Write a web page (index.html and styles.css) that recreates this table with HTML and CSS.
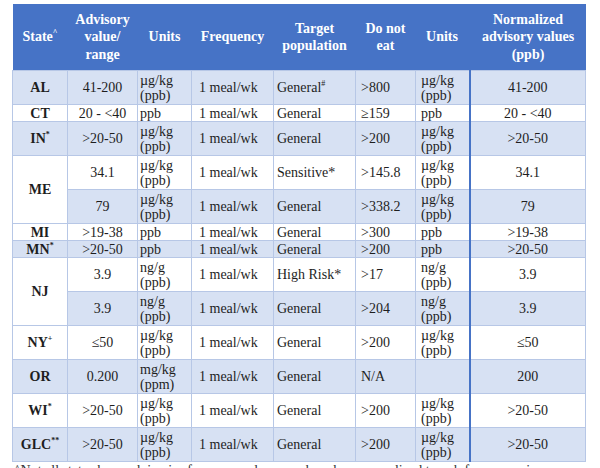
FILE: index.html
```html
<!DOCTYPE html>
<html>
<head>
<meta charset="utf-8">
<link rel="stylesheet" href="styles.css">
</head>
<body>
<div class="page">
<table class="adv">
<colgroup>
<col class="c1"><col class="c2"><col class="c3"><col class="c4"><col class="c5"><col class="c6"><col class="c7"><col class="c8">
</colgroup>
<thead>
<tr>
<th>State<sup>^</sup></th>
<th>Advisory<br>value/<br>range</th>
<th>Units</th>
<th>Frequency</th>
<th>Target<br>population</th>
<th>Do not<br>eat</th>
<th class="th7">Units</th>
<th>Normalized<br>advisory values<br>(ppb)</th>
</tr>
</thead>
<tbody>
<tr class="r2 alt">
<td class="st">AL</td><td class="ctr">41-200</td><td class="u1">µg/kg<br>(ppb)</td><td class="fq">1 meal/wk</td><td class="tg">General<sup>#</sup></td><td class="dn">&gt;800</td><td class="u2">µg/kg<br>(ppb)</td><td class="ctr">41-200</td>
</tr>
<tr class="r1">
<td class="st">CT</td><td class="ctr">20 - &lt;40</td><td class="u1">ppb</td><td class="fq">1 meal/wk</td><td class="tg">General</td><td class="dn">≥159</td><td class="u2">ppb</td><td class="ctr">20 - &lt;40</td>
</tr>
<tr class="r2 alt">
<td class="st">IN<sup>*</sup></td><td class="ctr">&gt;20-50</td><td class="u1">µg/kg<br>(ppb)</td><td class="fq">1 meal/wk</td><td class="tg">General</td><td class="dn">&gt;200</td><td class="u2">µg/kg<br>(ppb)</td><td class="ctr">&gt;20-50</td>
</tr>
<tr class="r2">
<td class="st white" rowspan="2">ME</td><td class="ctr">34.1</td><td class="u1">µg/kg<br>(ppb)</td><td class="fq">1 meal/wk</td><td class="tg">Sensitive*</td><td class="dn">&gt;145.8</td><td class="u2">µg/kg<br>(ppb)</td><td class="ctr">34.1</td>
</tr>
<tr class="r2 alt">
<td class="ctr">79</td><td class="u1">µg/kg<br>(ppb)</td><td class="fq">1 meal/wk</td><td class="tg">General</td><td class="dn">&gt;338.2</td><td class="u2">µg/kg<br>(ppb)</td><td class="ctr">79</td>
</tr>
<tr class="r1">
<td class="st">MI</td><td class="ctr">&gt;19-38</td><td class="u1">ppb</td><td class="fq">1 meal/wk</td><td class="tg">General</td><td class="dn">&gt;300</td><td class="u2">ppb</td><td class="ctr">&gt;19-38</td>
</tr>
<tr class="r1 alt">
<td class="st">MN<sup>*</sup></td><td class="ctr">&gt;20-50</td><td class="u1">ppb</td><td class="fq">1 meal/wk</td><td class="tg">General</td><td class="dn">&gt;200</td><td class="u2">ppb</td><td class="ctr">&gt;20-50</td>
</tr>
<tr class="r2">
<td class="st white" rowspan="2">NJ</td><td class="ctr">3.9</td><td class="u1">ng/g<br>(ppb)</td><td class="fq">1 meal/wk</td><td class="tg">High Risk*</td><td class="dn">&gt;17</td><td class="u2">ng/g<br>(ppb)</td><td class="ctr">3.9</td>
</tr>
<tr class="r2 alt">
<td class="ctr">3.9</td><td class="u1">ng/g<br>(ppb)</td><td class="fq">1 meal/wk</td><td class="tg">General</td><td class="dn">&gt;204</td><td class="u2">ng/g<br>(ppb)</td><td class="ctr">3.9</td>
</tr>
<tr class="r2">
<td class="st">NY<sup>+</sup></td><td class="ctr">≤50</td><td class="u1">µg/kg<br>(ppb)</td><td class="fq">1 meal/wk</td><td class="tg">General</td><td class="dn">&gt;200</td><td class="u2">µg/kg<br>(ppb)</td><td class="ctr">≤50</td>
</tr>
<tr class="r2 alt">
<td class="st">OR</td><td class="ctr">0.200</td><td class="u1">mg/kg<br>(ppm)</td><td class="fq">1 meal/wk</td><td class="tg">General</td><td class="dn">N/A</td><td class="u2"></td><td class="ctr">200</td>
</tr>
<tr class="r2">
<td class="st">WI<sup>*</sup></td><td class="ctr">&gt;20-50</td><td class="u1">µg/kg<br>(ppb)</td><td class="fq">1 meal/wk</td><td class="tg">General</td><td class="dn">&gt;200</td><td class="u2">µg/kg<br>(ppb)</td><td class="ctr">&gt;20-50</td>
</tr>
<tr class="r2 alt">
<td class="st">GLC<sup>**</sup></td><td class="ctr">&gt;20-50</td><td class="u1">µg/kg<br>(ppb)</td><td class="fq">1 meal/wk</td><td class="tg">General</td><td class="dn">&gt;200</td><td class="u2">µg/kg<br>(ppb)</td><td class="ctr">&gt;20-50</td>
</tr>
</tbody>
</table>
<p class="note">^Not all states have advisories for one meal per week; values normalized to ppb for comparison.</p>
</div>
</body>
</html>
```

FILE: styles.css
```css
html, body {
  margin: 0;
  padding: 0;
  background: #ffffff;
}
.page {
  width: 600px;
  height: 468px;
  overflow: hidden;
  padding: 4px 0 0 12px;
  box-sizing: border-box;
  font-family: "Liberation Serif", "Times New Roman", serif;
  color: #1e1e1e;
}
.adv {
  border-collapse: collapse;
  table-layout: fixed;
  width: 573px;
  font-size: 14px;
}
.c1 { width: 55px; }
.c2 { width: 70px; }
.c3 { width: 54px; }
.c4 { width: 82px; }
.c5 { width: 82px; }
.c6 { width: 60px; }
.c7 { width: 54px; }
.c8 { width: 116px; }
.adv th {
  background: #4673c6;
  color: #ffffff;
  font-weight: bold;
  height: 66px;
  line-height: 17.5px;
  padding: 0;
  text-align: center;
  vertical-align: middle;
  border: none;
}
.adv th.th7 {
  border-right: 2px solid #4673c6;
}
.adv sup {
  font-size: 8px;
  line-height: 0;
  vertical-align: 6px;
}
.adv td {
  border: 1px solid #b7c7e6;
  padding: 0 2px;
  line-height: 15px;
  vertical-align: middle;
  white-space: nowrap;
  background: #ffffff;
}
.adv tr.alt td {
  background: #d7e1f3;
}
.adv tr.alt td.white {
  background: #ffffff;
}
.r2 { height: 34px; }
.r1 { height: 17px; }
.st {
  text-align: center;
  font-weight: bold;
}
.ctr { text-align: center; }
.adv td.u1 { padding-left: 2px; }
.adv td.fq { padding-left: 7px; }
.adv td.tg { padding-left: 3px; }
.adv td.dn { padding-left: 5px; }
.adv td.u2 {
  padding-left: 5px;
  border-right: 2px solid #4673c6;
}
.note {
  margin: 1px 0 0 2px;
  font-size: 14px;
  line-height: 16px;
  white-space: nowrap;
  color: #333333;
}
```
